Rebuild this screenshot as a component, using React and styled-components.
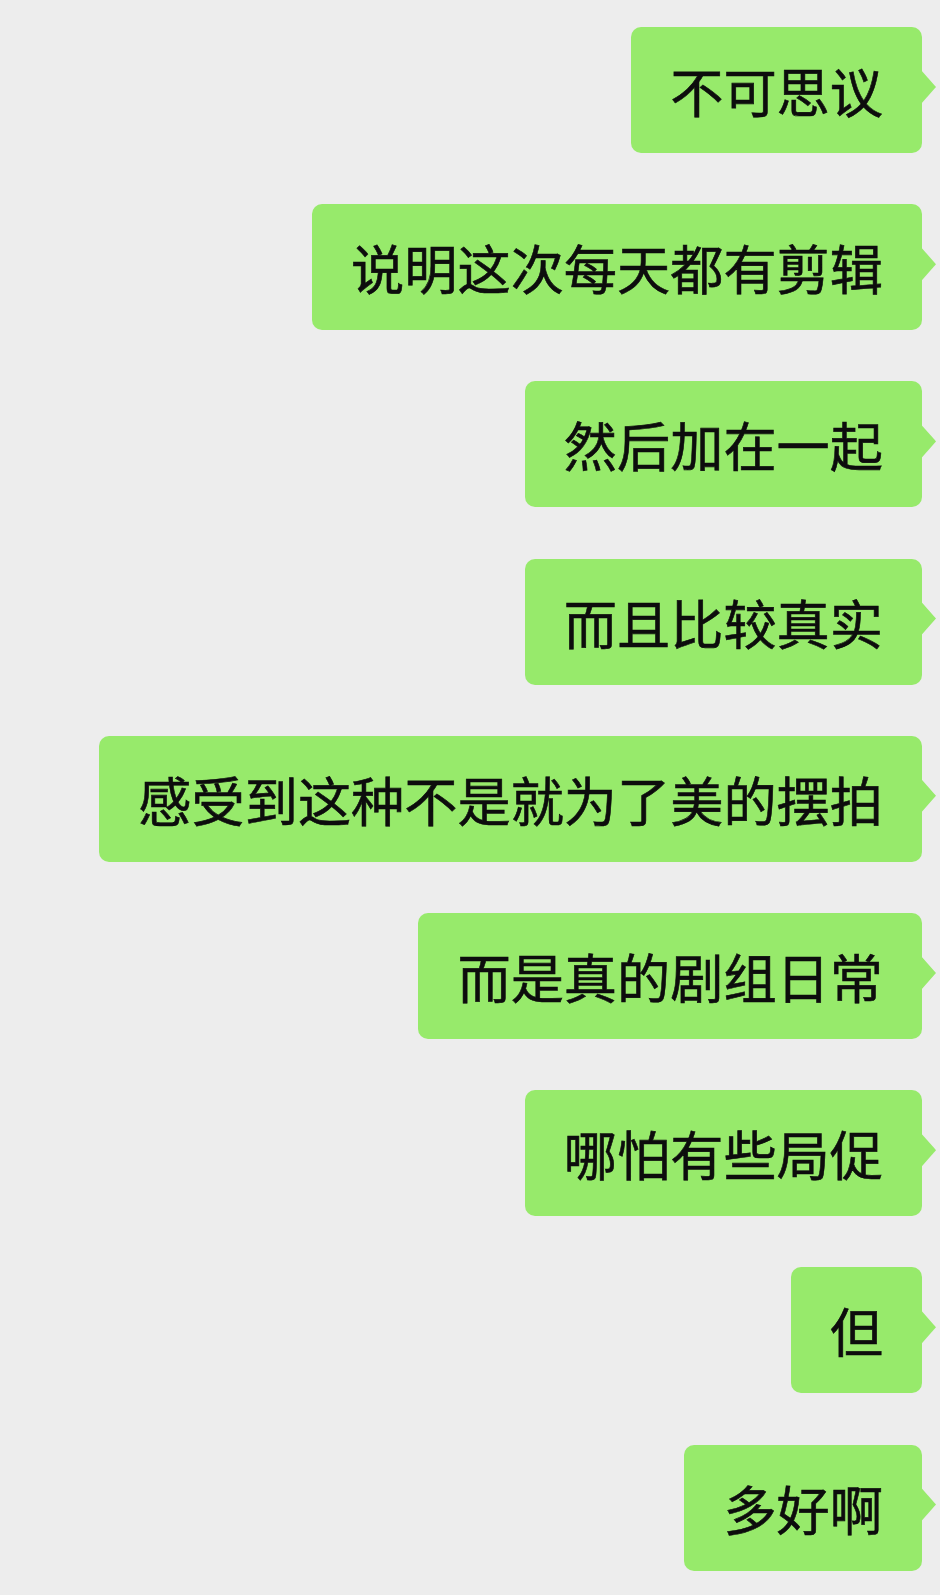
import React from 'react'
import styled, { createGlobalStyle } from 'styled-components'

const GlobalStyle = createGlobalStyle`
    html, body {
        margin: 0;
        padding: 0;
        background: #ededed;
    }
`;

const Chat = styled.div`
    width: 940px;
    min-height: 1595px;
    box-sizing: border-box;
    padding: 27px 18px 0 0;
    display: flex;
    flex-direction: column;
    align-items: flex-end;
    gap: 51.2px;
    background: #ededed;
    font-family: "Noto Sans CJK SC", "Noto Sans", sans-serif;
`;

const Bubble = styled.div`
    position: relative;
    height: 126px;
    line-height: 126px;
    padding: 0 39px;
    background: #97ea6b;
    border-radius: 10px;
    color: #0d0d0d;
    font-size: 53.2px;
    font-weight: 400;
    -webkit-text-stroke: 0.6px #0d0d0d;
    white-space: nowrap;

    /* the little tail on the right */
    &::after {
        content: '';
        position: absolute;
        top: 43px;
        right: -14px;
        width: 15px;
        height: 34px;
        background: #97ea6b;
        clip-path: polygon(0 0, 88% 44%, 100% 50%, 88% 56%, 0 100%);
    }
`;

const messages = [
    '不可思议',
    '说明这次每天都有剪辑',
    '然后加在一起',
    '而且比较真实',
    '感受到这种不是就为了美的摆拍',
    '而是真的剧组日常',
    '哪怕有些局促',
    '但',
    '多好啊',
];

const App = () => {
    return (
        <>
            <GlobalStyle />
            <Chat>
                {messages.map((text, index) => (
                    <Bubble key={text + index}>{text}</Bubble>
                ))}
            </Chat>
        </>
    );
}

export default App;
